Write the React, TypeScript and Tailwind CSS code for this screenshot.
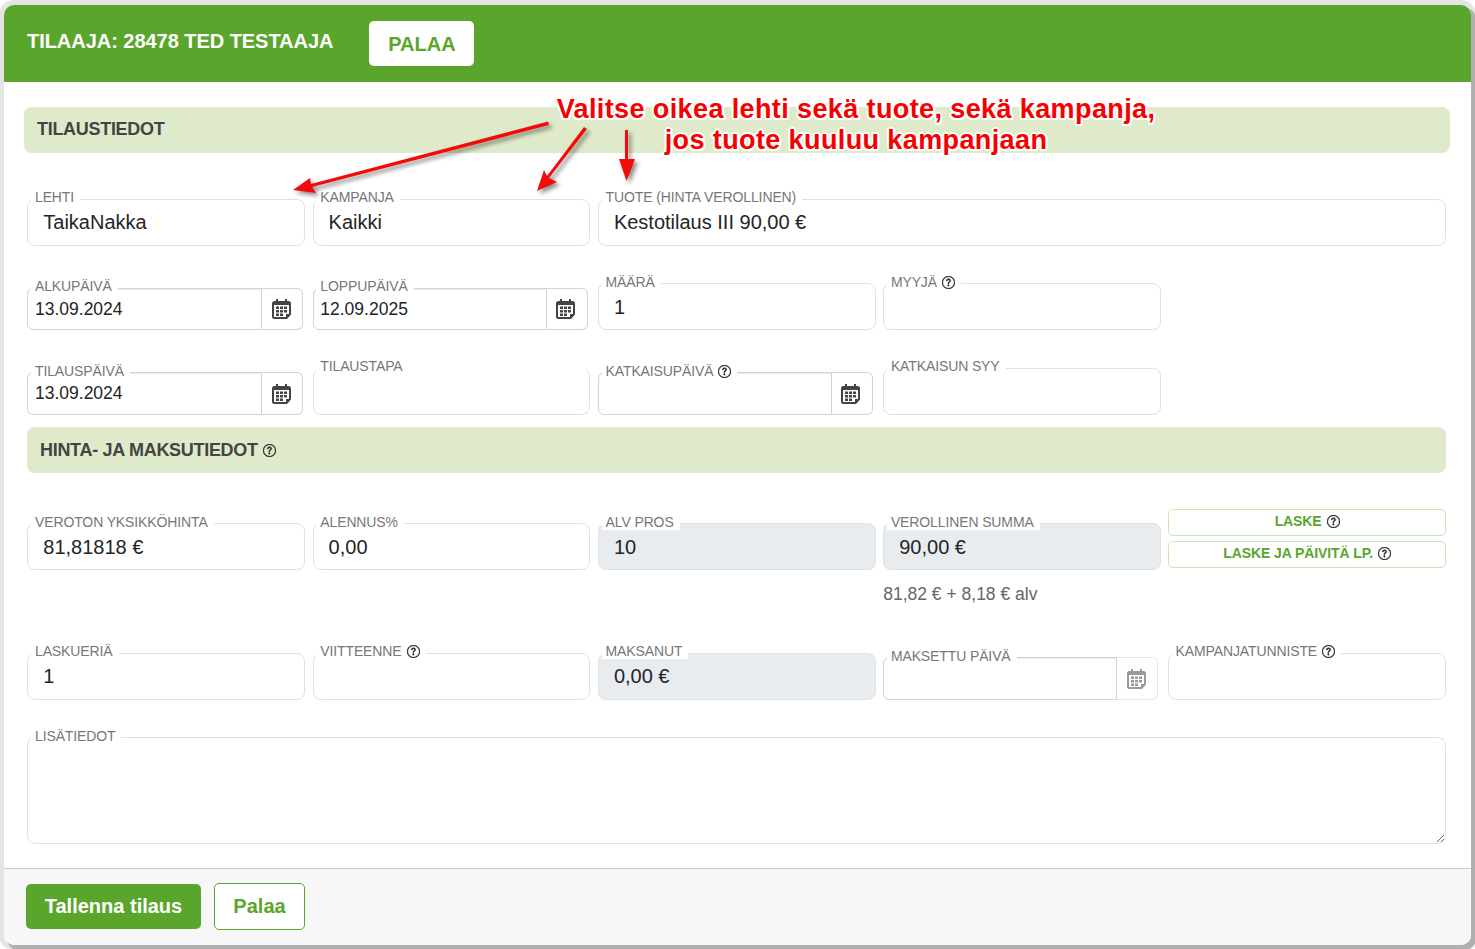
import { BsQuestionCircle } from "react-icons/bs";

const Help = ({ className = "ml-[5px]" }: { className?: string }) => (
  <BsQuestionCircle className={`inline-block w-[13px] h-[13px] text-[#222] stroke-[0.5] align-[-2px] ${className}`} />
);

const Calendar = ({ muted = false }: { muted?: boolean }) => (
  <svg width="19" height="20" viewBox="0 0 19 20" className={muted ? "text-[#999]" : "text-[#444]"}>
    <path fill="currentColor" d="M4 0h2v2h7V0h2v2h1.5A2.5 2.5 0 0 1 19 4.5v11L15 20H2.5A2.5 2.5 0 0 1 0 17.5v-13A2.5 2.5 0 0 1 2.5 2H4z" />
    <path fill="#fff" d="M2 6h15v9h-3v3H2.5a.5.5 0 0 1-.5-.5z" />
    <path fill="currentColor" d="M4 7.5h3v2.500H4zM8 7.500h3v2.500H8zM12 7.500h3v2.500h-3zM4 11h3v2.500H4zM8 11h3v2.500H8zM12 11h3v2.500h-3zM4 14.500h3V17H4zM8 14.500h3V17H8z" />
  </svg>
);

const Label = ({ text, help, wide, top = "-top-[11px]", left = "left-[2.700px]" }: { text: string; help?: boolean; wide?: boolean; top?: string; left?: string }) => (
  <span
    className={`absolute ${top} ${left} bg-white pl-[4px] pr-[6px] text-[14px] leading-[16px] text-[#777] tracking-[-0.12px] whitespace-nowrap ${wide ? "right-[3px]" : ""}`}
  >
    {text}
    {help && <Help />}
  </span>
);

const Field = ({
  label,
  value,
  help,
  disabled,
  wide,
  top,
  low,
}: {
  label: string;
  value?: string;
  help?: boolean;
  disabled?: boolean;
  wide?: boolean;
  top?: string;
  low?: boolean;
}) => (
  <div
    className={`relative h-[47px] rounded-[8px] border border-[#dee2e6] pl-[15px] text-[20px] leading-[45px] text-[#212529] ${
      disabled ? "bg-[#e9ecef]" : "bg-white"
    }`}
  >
    <Label text={label} help={help} wide={wide} top={top} />
    <div className={low ? "pt-[1px]" : ""}>{value}</div>
  </div>
);

const DateField = ({
  label,
  value,
  help,
  muted,
  h = "h-[43px]",
  w = "w-[276px]",
  top,
}: {
  label: string;
  value?: string;
  help?: boolean;
  muted?: boolean;
  h?: string;
  w?: string;
  top?: string;
}) => (
  <div className={`flex ${h} ${w}`}>
    <div className="relative flex-1 rounded-l-[6px] border border-[#ced4da] bg-white pl-[6.700px] text-[17.500px] leading-[40px] text-[#212529] shadow-[inset_0_1px_1px_rgba(0,0,0,0.08)]">
      <Label text={label} help={help} top={top} />
      {value}
    </div>
    <div
      className={`flex w-[41px] items-center justify-center rounded-r-[6px] border border-l-0 pr-[2px] ${
        muted ? "border-[#e4e7ea]" : "border-[#ced4da]"
      } bg-white`}
    >
      <Calendar muted={muted} />
    </div>
  </div>
);

const Section = ({ children, className }: { children: React.ReactNode; className: string }) => (
  <div className={`flex h-[46px] items-center rounded-[8px] bg-[#dfeaca] text-[18px] font-bold tracking-[-0.3px] text-[#444] ${className}`}>
    {children}
  </div>
);

const Row = ({ children, className }: { children: React.ReactNode; className: string }) => (
  <div className={`ml-[23.300px] mr-[24.700px] grid grid-cols-5 gap-x-[7.500px] ${className}`}>{children}</div>
);

const GreenOutlineButton = ({ children, className }: { children: React.ReactNode; className: string }) => (
  <button className={`w-full rounded-[5px] border border-[#c5e8b4] bg-white pb-[2px] text-[14px] font-bold tracking-[-0.1px] text-[#5aa62c] ${className}`}>
    {children}
  </button>
);

export default function App() {
  return (
    <div className="relative h-[949px] w-[1475px] overflow-hidden bg-white pb-[4px] pl-[4px] pr-[4px] pt-[5px] font-['Liberation_Sans',Arial,sans-serif]">
      <div className="flex h-full flex-col overflow-hidden rounded-[10px] bg-white shadow-[4px_4px_0_1px_#b0b0b0,0_0_0_5px_#e4e4e4]">
        <header className="flex h-[77px] shrink-0 items-center bg-[#5aa62c] pl-[23px]">
          <h1 className="-mt-[5px] text-[20px] font-bold tracking-[-0.04px] text-white">TILAAJA: 28478 TED TESTAAJA</h1>
          <button className="ml-[36px] h-[45px] w-[105px] rounded-[5px] bg-white text-[20px] font-bold text-[#5aa62c]">PALAA</button>
        </header>

        <main className="flex flex-1 flex-col">
          <Section className="ml-[20px] mr-[21px] mt-[25px] pb-[2px] pl-[13px]">TILAUSTIEDOT</Section>

          <Row className="mt-[46px]">
            <Field label="LEHTI" value="TaikaNakka" />
            <Field label="KAMPANJA" value="Kaikki" />
            <div className="col-span-3 mr-0">
              <Field label="TUOTE (HINTA VEROLLINEN)" value="Kestotilaus III 90,00 €" />
            </div>
          </Row>

          <Row className="mt-[37px] items-end">
            <DateField label="ALKUPÄIVÄ" value="13.09.2024" h="h-[42px]" />
            <DateField label="LOPPUPÄIVÄ" value="12.09.2025" h="h-[42px]" w="w-[275px]" />
            <Field label="MÄÄRÄ" value="1" top="-top-[10px]" low />
            <Field label="MYYJÄ" help top="-top-[10px]" />
          </Row>

          <Row className="mt-[38px] items-end">
            <DateField label="TILAUSPÄIVÄ" value="13.09.2024" top="-top-[10px]" />
            <Field label="TILAUSTAPA" wide />
            <DateField label="KATKAISUPÄIVÄ" help w="w-[275px]" top="-top-[10px]" />
            <Field label="KATKAISUN SYY" />
          </Row>

          <Section className="ml-[23px] mr-[25px] mt-[12px] pl-[13px]">
            HINTA- JA MAKSUTIEDOT
            <Help />
          </Section>

          <Row className="mt-[50px]">
            <Field label="VEROTON YKSIKKÖHINTA" value="81,81818 €" top="-top-[10px]" low />
            <Field label="ALENNUS%" value="0,00" top="-top-[10px]" low />
            <Field label="ALV PROS" value="10" disabled top="-top-[10px]" low />
            <Field label="VEROLLINEN SUMMA" value="90,00 €" disabled top="-top-[10px]" low />
            <div className="-ml-[0.600px] -mt-[14px] flex flex-col gap-[5px]">
              <GreenOutlineButton className="h-[27px]">
                LASKE
                <Help />
              </GreenOutlineButton>
              <GreenOutlineButton className="h-[27px]">
                LASKE JA PÄIVITÄ LP.
                <Help />
              </GreenOutlineButton>
            </div>
          </Row>

          <Row className="mt-[12px]">
            <p className="col-start-4 col-span-2 text-[17.500px] leading-[24px] text-[#666]">81,82 € + 8,18 € alv</p>
          </Row>

          <Row className="mt-[47px] items-end">
            <Field label="LASKUERIÄ" value="1" />
            <Field label="VIITTEENNE" help />
            <Field label="MAKSANUT" value="0,00 €" disabled />
            <DateField label="MAKSETTU PÄIVÄ" muted w="w-[275px]" top="-top-[10px]" />
            <div className="-ml-[0.600px]">
              <Field label="KAMPANJATUNNISTE" help />
            </div>
          </Row>

          <div className="relative ml-[23px] mr-[25px] mt-[37px] h-[107px]">
            <textarea
              aria-label="LISÄTIEDOT"
              className="block h-full w-full rounded-[8px] border border-[#dee2e6] bg-transparent outline-none"
            />
            <Label text="LISÄTIEDOT" top="-top-[9px]" left="left-[4px]" />
          </div>
        </main>

        <footer className="flex h-[77px] shrink-0 items-center gap-[13px] border-t border-[#ccc] bg-[#f7f7f7] pb-[2px] pl-[22px]">
          <button className="h-[45px] w-[175px] rounded-[5px] bg-[#5aa62c] text-[20px] font-bold text-white">Tallenna tilaus</button>
          <button className="h-[47px] w-[91px] rounded-[5px] border border-[#5aa62c] bg-white text-[20px] font-bold text-[#5aa62c]">Palaa</button>
        </footer>
      </div>

      {/* Annotation drawn over the form */}
      <svg width="1475" height="949" className="pointer-events-none absolute left-0 top-0 [filter:drop-shadow(3px_3px_2px_rgba(0,0,0,0.45))]">
        <g fill="#f50a0a" stroke="none">
          <path d="M548 121.500 L549 125 L312 187 L316 193 L293 190 L310 178 L311 184 Z" />
          <path d="M584 127 L587 129 L549 178 L557 182 L537 191 L544 170 L547 176 Z" />
          <path d="M625 130 H628 V159 H635 L626.500 181 L619 159 H625 Z" />
        </g>
      </svg>
      <div className="pointer-events-none absolute left-[457px] top-[94px] w-[798px] text-center text-[27px] font-bold leading-[31px] tracking-[0.39px] text-[#f50000] [text-shadow:2px_0_0_#fff,-2px_0_0_#fff,0_2px_0_#fff,0_-2px_0_#fff,1.500px_1.500px_0_#fff,-1.500px_1.500px_0_#fff,1.500px_-1.500px_0_#fff,-1.500px_-1.500px_0_#fff]">
        Valitse oikea lehti sekä tuote, sekä kampanja,
        <br />
        jos tuote kuuluu kampanjaan
      </div>
    </div>
  );
}
